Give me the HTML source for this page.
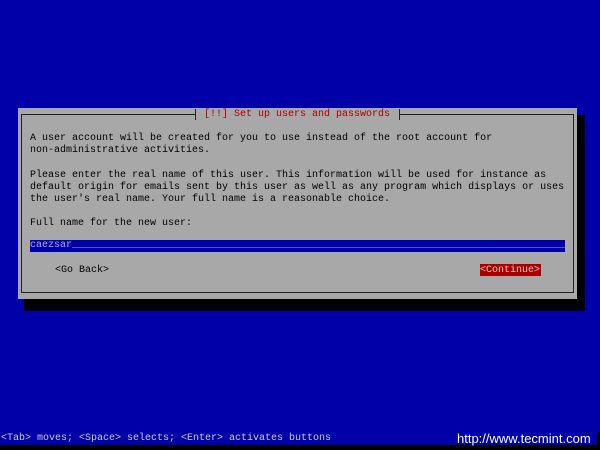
<!DOCTYPE html>
<html><head><style>
body{margin:0;width:600px;height:450px;background:#0000a8;position:relative;overflow:hidden;font-family:"Liberation Mono",monospace;font-size:10px;}
div{position:absolute;white-space:pre;line-height:12px;}
.t{color:#000;}
</style></head><body>
<div style="left:24px;top:115px;width:561px;height:196px;background:#000"></div>
<div style="left:18px;top:108px;width:559px;height:191px;background:#a8a8a8"></div>
<div style="left:21px;top:114px;width:553px;height:179px;border:1px solid #222;box-sizing:border-box;border-top:none"></div>
<div style="left:21px;top:114px;width:175px;height:1px;background:#222"></div>
<div style="left:195px;top:109px;width:1px;height:11px;background:#222"></div>
<div style="left:399px;top:109px;width:1px;height:11px;background:#222"></div>
<div style="left:399px;top:114px;width:175px;height:1px;background:#222"></div>
<div style="left:198px;top:109px;color:#a80000;background:#a8a8a8;padding:0 6px">[!!] Set up users and passwords</div>
<div class="t" style="left:30px;top:133px;line-height:12.2px">A user account will be created for you to use instead of the root account for
non-administrative activities.

Please enter the real name of this user. This information will be used for instance as
default origin for emails sent by this user as well as any program which displays or uses
the user's real name. Your full name is a reasonable choice.

Full name for the new user:</div>
<div style="left:30px;top:240px;width:535px;height:12px;background:#0000a8;overflow:hidden;color:#a8a8ff">caezsar______________________________________________________________________________________</div>
<div class="t" style="left:55px;top:265px">&lt;Go Back&gt;</div>
<div style="left:480px;top:264px;width:61px;height:12px;background:#a80000"></div>
<div style="left:480px;top:265px;color:#ffc0c0">&lt;Continue&gt;</div>
<div style="left:1px;top:433px;color:#ccc">&lt;Tab&gt; moves; &lt;Space&gt; selects; &lt;Enter&gt; activates buttons</div>
<div style="left:0;top:445px;width:600px;height:5px;background:#000"></div>
<div style="left:597px;top:432px;width:3px;height:18px;background:#000"></div>
<div style="left:457px;top:431px;color:#fff;font-family:'Liberation Sans',sans-serif;font-size:13px;line-height:15px">http://www.tecmint.com</div>
</body></html>
